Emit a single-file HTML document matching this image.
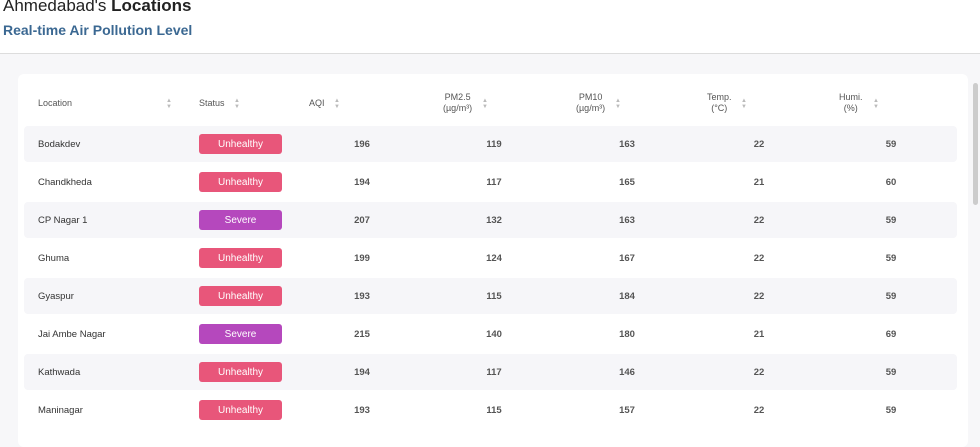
<html><head><style>
body{margin:0;width:980px;height:447px;overflow:hidden;background:#fff;font-family:"Liberation Sans",sans-serif;position:relative}
.t{position:absolute;left:3px;top:-4px;font-size:17px;color:#222}
.s{position:absolute;left:3px;top:22px;font-size:14px;font-weight:bold;color:#3b6892}
.ln{position:absolute;left:0;top:53px;width:980px;height:1px;background:#ddd}
.bg{position:absolute;left:0;top:54px;width:980px;height:393px;background:#f7f7f9}
.card{position:absolute;left:18px;top:74px;width:950px;height:373px;background:#fff;border-radius:6px}
.h{position:absolute;font-size:9px;color:#555;line-height:11px}
.ar{position:absolute;font-size:6px;color:#bbb;line-height:6px}
.row{position:absolute;left:24px;width:933px;height:36px;border-radius:4px}
.c{position:absolute;font-size:9.5px;color:#333;top:13px}
.n{transform:translateX(-50%);font-weight:bold;color:#555}
.b{position:absolute;left:175px;top:8px;width:83px;height:20px;border-radius:3px;color:#fff;font-size:10px;display:flex;align-items:center;justify-content:center}
.sb{position:absolute;left:973px;top:83px;width:5px;height:122px;background:#ccc;border-radius:3px}
</style></head><body>
<div class="t">Ahmedabad's <b>Locations</b></div>
<div class="s">Real-time Air Pollution Level</div>
<div class="ln"></div><div class="bg"></div><div class="card"></div>
<div class="sb"></div>
<div class="h" style="left:38px;top:98px">Location</div><div class="ar" style="left:166px;top:98px">▲<br>▼</div>
<div class="h" style="left:199px;top:98px">Status</div><div class="ar" style="left:234px;top:98px">▲<br>▼</div>
<div class="h" style="left:309px;top:98px">AQI</div><div class="ar" style="left:334px;top:98px">▲<br>▼</div>
<div class="h" style="left:443px;top:92px;text-align:center">PM2.5<br>(µg/m³)</div><div class="ar" style="left:482px;top:98px">▲<br>▼</div>
<div class="h" style="left:576px;top:92px;text-align:center">PM10<br>(µg/m³)</div><div class="ar" style="left:615px;top:98px">▲<br>▼</div>
<div class="h" style="left:707px;top:92px;text-align:center">Temp.<br>(°C)</div><div class="ar" style="left:741px;top:98px">▲<br>▼</div>
<div class="h" style="left:839px;top:92px;text-align:center">Humi.<br>(%)</div><div class="ar" style="left:873px;top:98px">▲<br>▼</div>

<div class="row" style="top:126px;background:#f6f6f9"><span class="c" style="left:14px">Bodakdev</span><div class="b" style="background:#e8567a">Unhealthy</div><span class="c n" style="left:338px">196</span><span class="c n" style="left:470px">119</span><span class="c n" style="left:603px">163</span><span class="c n" style="left:735px">22</span><span class="c n" style="left:867px">59</span></div>
<div class="row" style="top:164px"><span class="c" style="left:14px">Chandkheda</span><div class="b" style="background:#e8567a">Unhealthy</div><span class="c n" style="left:338px">194</span><span class="c n" style="left:470px">117</span><span class="c n" style="left:603px">165</span><span class="c n" style="left:735px">21</span><span class="c n" style="left:867px">60</span></div>
<div class="row" style="top:202px;background:#f6f6f9"><span class="c" style="left:14px">CP Nagar 1</span><div class="b" style="background:#b548bd">Severe</div><span class="c n" style="left:338px">207</span><span class="c n" style="left:470px">132</span><span class="c n" style="left:603px">163</span><span class="c n" style="left:735px">22</span><span class="c n" style="left:867px">59</span></div>
<div class="row" style="top:240px"><span class="c" style="left:14px">Ghuma</span><div class="b" style="background:#e8567a">Unhealthy</div><span class="c n" style="left:338px">199</span><span class="c n" style="left:470px">124</span><span class="c n" style="left:603px">167</span><span class="c n" style="left:735px">22</span><span class="c n" style="left:867px">59</span></div>
<div class="row" style="top:278px;background:#f6f6f9"><span class="c" style="left:14px">Gyaspur</span><div class="b" style="background:#e8567a">Unhealthy</div><span class="c n" style="left:338px">193</span><span class="c n" style="left:470px">115</span><span class="c n" style="left:603px">184</span><span class="c n" style="left:735px">22</span><span class="c n" style="left:867px">59</span></div>
<div class="row" style="top:316px"><span class="c" style="left:14px">Jai Ambe Nagar</span><div class="b" style="background:#b548bd">Severe</div><span class="c n" style="left:338px">215</span><span class="c n" style="left:470px">140</span><span class="c n" style="left:603px">180</span><span class="c n" style="left:735px">21</span><span class="c n" style="left:867px">69</span></div>
<div class="row" style="top:354px;background:#f6f6f9"><span class="c" style="left:14px">Kathwada</span><div class="b" style="background:#e8567a">Unhealthy</div><span class="c n" style="left:338px">194</span><span class="c n" style="left:470px">117</span><span class="c n" style="left:603px">146</span><span class="c n" style="left:735px">22</span><span class="c n" style="left:867px">59</span></div>
<div class="row" style="top:392px"><span class="c" style="left:14px">Maninagar</span><div class="b" style="background:#e8567a">Unhealthy</div><span class="c n" style="left:338px">193</span><span class="c n" style="left:470px">115</span><span class="c n" style="left:603px">157</span><span class="c n" style="left:735px">22</span><span class="c n" style="left:867px">59</span></div>
</body></html>
